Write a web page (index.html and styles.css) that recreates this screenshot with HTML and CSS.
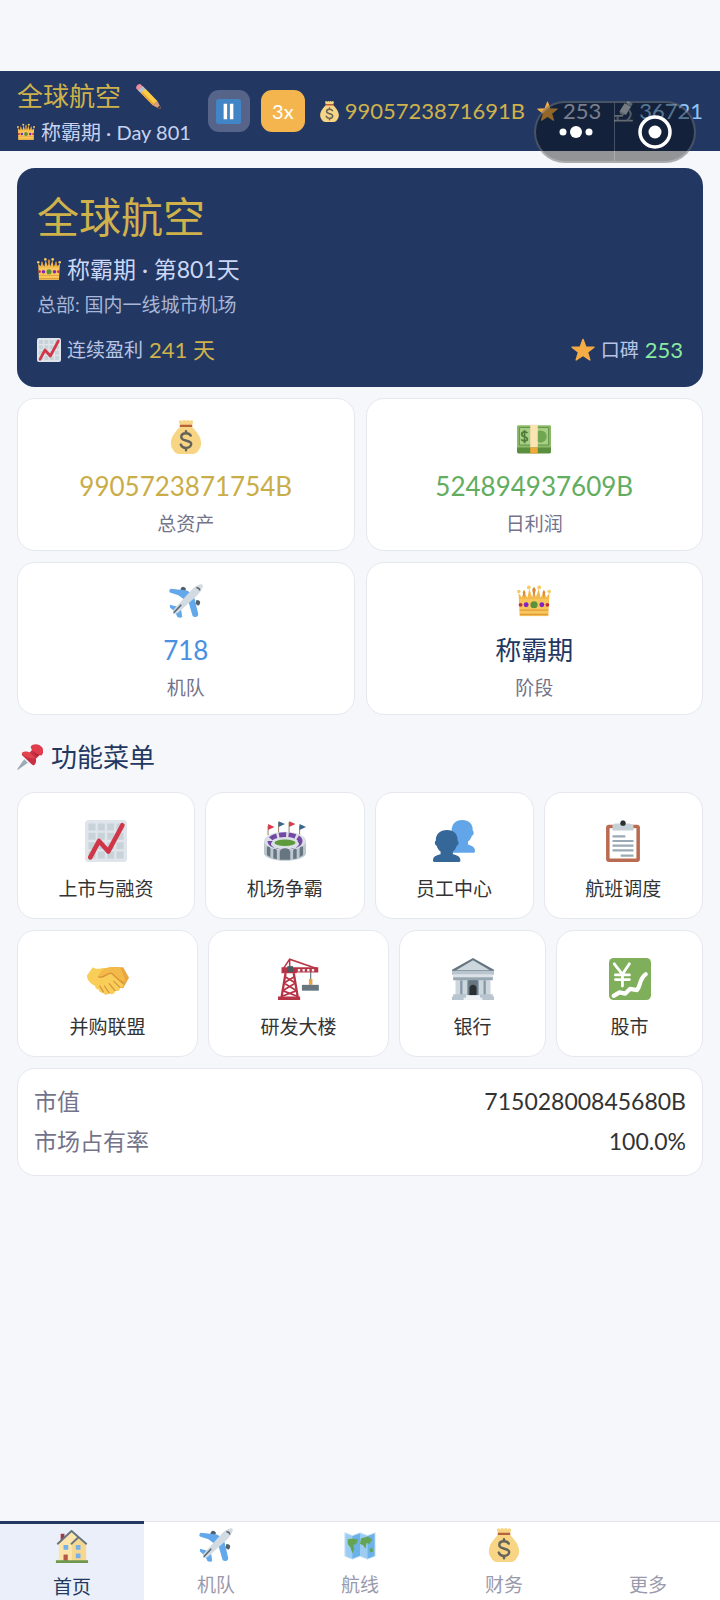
FILE: index.html
```html
<!DOCTYPE html>
<html lang="zh-CN">
<head>
<meta charset="utf-8">
<meta name="viewport" content="width=device-width, initial-scale=1">
<title>全球航空</title>
<link rel="stylesheet" href="styles.css">
</head>
<body>
<svg class="sprite" aria-hidden="true">
  <symbol id="crown" viewBox="0 0 36 36">
    <path fill="#f4ba4c" d="M3 34 1.600 9.500 5 14 7.500 8 11 14.500 13 5 16 14 18 6.500 20 14 23 5 25 14.500 28.500 8 31 14l3.400-4.500L33 34z"/>
    <path fill="#f7c75c" d="M3 16h30v18H3z"/>
    <g fill="#f7cb61"><circle cx="1.900" cy="8" r="1.900"/><circle cx="34.100" cy="8" r="1.900"/><circle cx="12.500" cy="3.600" r="2"/><circle cx="23.500" cy="3.600" r="2"/></g>
    <g fill="#d98a3d"><path d="m6 9 1.500-3L9 9l-1.500 6zM16 6l2-3 2 3-2 8zM27 9l1.500-3L30 9l-1.500 6z"/></g>
    <path fill="#e39a3b" d="M3 27h30v1.200H3zM3 31.500h30V33H3z"/>
    <circle cx="18" cy="22" r="3.800" fill="#5c913b"/><circle cx="9.700" cy="22" r="2.600" fill="#8224c4"/><circle cx="26.300" cy="22" r="2.600" fill="#8224c4"/><circle cx="3.800" cy="22" r="2" fill="#c1303c"/><circle cx="32.200" cy="22" r="2" fill="#c1303c"/>
  </symbol>
  <symbol id="pencil" viewBox="0 0 36 36">
    <path fill="#ea8f9d" d="M2 8C0 5 5 0 8 2l4 4-6 6z"/>
    <path fill="#b7c3cc" d="m4.500 10.500 6.500-6 4 4-6 6.500z"/>
    <path fill="#fccb48" d="m8 14 6.500-6 16.500 17-6 6z"/>
    <path fill="#e9a93a" d="m8 14 2-2 17 17-2 2z"/>
    <path fill="#d99e82" d="m25 31 6-6 4.500 8.500c.6 1.500-.6 2.500-2 2z"/>
    <path fill="#4b3b37" d="m34 31 1.500 3c.4 1.300-.5 1.700-1.500 1.500l-3-1.300z"/>
  </symbol>
  <symbol id="pause" viewBox="0 0 36 36">
    <rect width="36" height="36" rx="4" fill="#4185c6"/><path fill="#fff" d="M11 7h5v22h-5zM20 7h5v22h-5z"/>
  </symbol>
  <symbol id="moneybag" viewBox="0 0 36 36">
    <path fill="#f7d584" d="M12 7C7 12 2 18 2 24.500c0 3 .8 4.500 2 6.500 1.800 3.500 3.500 5 7 5h14c3.500 0 5.200-1.500 7-5 1.200-2 2-3.500 2-6.500C34 18 29 12 24 7z"/>
    <path fill="#f7d584" d="M11.500 6 10.500 1.500Q12-1 14 1.200 16-1 18 1.200 20-1 22 1.200 24-1 25.500 1.500L24.500 6z"/>
    <path fill="#b9613b" d="M12.500 5h11a1.200 1.200 0 0 1 0 2.500h-11a1.200 1.200 0 0 1 0-2.500z"/>
    <path fill="none" stroke="#66635a" stroke-width="2.600" stroke-linecap="round" d="M23 16.500c-1-2-3-2.500-5-2.500-3 0-5 1.500-5 4 0 5 10.500 3 10.500 7.500 0 2.500-2.500 4-5.500 4-2.500 0-4.700-1-5.500-3.500M18 12v2m0 16v2"/>
  </symbol>
  <symbol id="star" viewBox="0 0 36 36">
    <path fill="#f6ac44" stroke="#f6ac44" stroke-width="2" stroke-linejoin="round" d="m18 2 4.200 11.400 12.300.4-9.700 7.500L28.300 33 18 26.200 7.700 33l3.500-11.700-9.700-7.500 12.300-.4z"/>
  </symbol>
  <symbol id="microscope" viewBox="0 0 36 36">
    <path fill="#a5b4bf" d="M2 32h32v3H2zM3 24h14v3H3z"/>
    <path fill="none" stroke="#8796a1" stroke-width="3.500" d="M28 16c4 5 3 12-4 17M8 27v6"/>
    <path fill="#c3ced6" d="m20 4 11 6-9 14-11-6z"/><path fill="#9aa8b2" d="m25 0 9 4.500-3 5L22.500 5zM13 18l7 4-2 3-7-4z"/>
  </symbol>
  <symbol id="chart" viewBox="0 0 36 36">
    <rect width="36" height="36" rx="3" fill="#dfe5ea"/>
    <path fill="#c8d2d9" d="M3 3h6v6H3zM11 3h6v6h-6zM19 3h6v6h-6zM27 3h6v6h-6zM3 11h6v6H3zM11 11h6v6h-6zM19 11h6v6h-6zM27 11h6v6h-6zM3 19h6v6H3zM11 19h6v6h-6zM19 19h6v6h-6zM27 19h6v6h-6zM3 27h6v6H3zM11 27h6v6h-6zM19 27h6v6h-6zM27 27h6v6h-6z"/>
    <path fill="none" stroke="#cf3648" stroke-width="4" stroke-linecap="round" stroke-linejoin="round" d="m4.500 32 7.500-14 8 9L32 4.500"/>
  </symbol>
  <symbol id="cash" viewBox="0 0 36 36">
    <path fill="#5b8f40" d="M0 28h36v6a1.500 1.500 0 0 1-1.500 1.500h-33A1.500 1.500 0 0 1 0 34z"/>
    <path fill="#8dbb68" d="M0 7a1.500 1.500 0 0 1 1.500-1.500h33A1.500 1.500 0 0 1 36 7v22H0z"/>
    <path fill="#a9cf87" stroke="#5f8f47" stroke-width="1" d="M2.500 8h31v18.500h-31z"/>
    <circle cx="25" cy="17.500" r="6.500" fill="#71a650"/>
    <path fill="none" stroke="#4e7c39" stroke-width="1.800" d="M11 14c-1-2-6-2-6 1s6 2.500 6 5-5 3-6.500.5M8 10.500v14"/>
    <path fill="#fbe3b4" d="M14 5h8v24h-8z"/><path fill="#f0a83a" d="M14 29h8v6.500h-8z"/>
  </symbol>
  <symbol id="plane" viewBox="0 0 36 36">
    <path fill="#50616c" d="M12 6c1-4 4-4 6-1l-1 3zM29 17c5 0 5 4 2 6l-3-2z"/>
    <path fill="#62a8ea" d="m2 5 17 2 5 3 3 5 4 17c0 3-4 4-6 2l-4-14-11-8L1 9c-1-1-1-3 1-4zM1 22l8 2 4 4 1 7c-1 1-4 1-5 0l-3-6-5-4z"/>
    <path fill="#d3dbe2" d="M33 .5c2-.8 3.500.7 2.500 3-1 3-3 6-6 9L9 31l-5 1 1-5L24 6c3-3 6-5 9-5.500z"/>
    <path fill="none" stroke="#56646e" stroke-width="1.600" d="M5 30.500 13 22M29 4c2-.3 3.500 1 3.500 3"/>
  </symbol>
  <symbol id="pin" viewBox="0 0 36 36">
    <path fill="#9daab3" d="m10 21 5 5L1.500 35.500C.5 36 0 35.500.5 34.500z"/>
    <path fill="#c92f42" d="M7 13c4-2 7-2 10-.5L22 7l9 9-5 4.500c1 3 .5 6-2 8.500-1 .8-2 .5-3-.2L7.500 16C6.500 15 6.500 14 7 13z"/>
    <path fill="#e0444f" d="M6.500 12.500c4-3 9-2.500 12 0l7 7c-6 2-17-2-19-7z"/>
    <path fill="#df3d4c" d="M19 3.500C22-1 31-1 35 5c2 4 1.500 8-1 11-6 0-14-5-15-12.500z"/>
    <path fill="#a92334" d="m20 8 7 8 7-1c-5 0-11-3-14-7z"/>
  </symbol>
  <symbol id="stadium" viewBox="0 0 36 36">
    <path fill="none" stroke="#99866e" stroke-width=".9" d="M3.500 13V5M12.500 11V2M21.500 11V2M30.500 13V5"/>
    <path fill="#d73b4b" d="m3.500 3.500 5.500 2.500-5.500 2.500zM21.500 1l5.500 2.500L21.500 6z"/><path fill="#3a668f" d="M12.500 1 18 3.500 12.500 6zM30.500 3.500 36 6l-5.500 2.500z"/>
    <path fill="#bcc8d0" d="M0 18h36v11c-3 8-33 8-36 0z"/>
    <ellipse cx="18" cy="18" rx="18" ry="8" fill="#d9e1e7"/>
    <ellipse cx="18" cy="18" rx="13" ry="5.500" fill="none" stroke="#7548a4" stroke-width="4" stroke-dasharray="6 2"/>
    <ellipse cx="18" cy="20.500" rx="12" ry="4.500" fill="#d9e1e7"/><ellipse cx="18" cy="19.500" rx="9" ry="2.800" fill="#5d9a3b"/>
    <path fill="#66757f" d="M13.500 34v-6c0-5 9-5 9 0v6zM8 33v-8c2-1 3 0 3 2v6.500zM25 33.500V27c0-2 1-3 3-2v8zM2.500 30v-7c1.500-1 3 0 3 2v7zM30.500 32v-7c0-2 1.500-3 3-2v7z"/>
  </symbol>
  <symbol id="people" viewBox="0 0 36 36">
    <path fill="#62a6e9" d="M25 0c6 0 9.500 4 9 9 1.500 1 1 4-.7 4.500-.5 2-1.600 4-3.300 5v2.500c3 1 6 2 6 5.500 0 1-.5 1.500-1.500 1.500H16V9c0-5 3-9 9-9z"/>
    <path fill="#356799" d="M12 8.500c6 0 9.500 4 9 9 1.500 1 1 4-.7 4.500-.5 2-1.600 4-3.300 5v2.300c3 .7 6.500 1.700 6.500 5.200 0 1-.5 1.500-1.500 1.500H1.500C.5 36 0 35.500 0 34.500c0-3.500 3.500-4.500 6.500-5.200V27c-1.700-1-2.800-3-3.300-5C1.500 21.500 1 18.500 2.500 17.500 2 12.500 6 8.500 12 8.500z"/>
  </symbol>
  <symbol id="clipboard" viewBox="0 0 36 36">
    <rect x="3.500" y="4" width="29" height="32" rx="2.500" fill="#ba6a50"/><path fill="#fff" d="M6.500 7h23v26h-23z"/>
    <path fill="#c6d0d7" d="M14 3h2c0-4 4-4 4 0h3.500L27 4.500V9H9V4.500L11 3z"/><circle cx="18" cy="2.700" r="2.300" fill="#292f33"/>
    <path stroke="#99aab5" stroke-width="1.800" d="M9 14h11M9 18h18M9 22h18M9 26h18M16 30.500h11"/>
  </symbol>
  <symbol id="handshake" viewBox="0 0 36 36">
    <path fill="#e9a83e" d="M18 9c5-2 9-1 13-1l5 9-5 9-13-2z"/>
    <path fill="#f9ce58" d="M5 8c4 3 8-.5 13 1l12 12c3 3 0 5-2 4 1 3-2 4-4 3 0 3-3 4-5 2-1 2-4 2-5 0-2 0-4-1-4-3-2 0-3-1-3-3-4-2-7-5-7-9z"/>
    <path fill="#f4ba49" d="M11 13c4-6 12-6 18-4l4 11c-5-1-8-4-12-7-3 0-7 5-10 4-2-1-1-3 0-4z"/>
    <path fill="none" stroke="#d8943c" stroke-width="1.100" stroke-linecap="round" d="M10 16c3 2 7-3 11-3l10 9M23 20l5 5M19 22l5 6M15 24l4 6M11 24l3 5"/>
  </symbol>
  <symbol id="crane" viewBox="0 0 36 36">
    <path fill="none" stroke="#b63446" stroke-width="1.300" d="M4 10 10 1l23 8M10 1v9"/>
    <path fill="none" stroke="#b63446" stroke-width="2" d="M6.500 13 3 34M13.500 13l3.500 21"/>
    <path fill="none" stroke="#b63446" stroke-width="1.500" d="m6 16 9 5.500M14 16l-9 5.500M5 21.500 16 28M15 21.500 4 28M3 33l13-5M17 33 4 28"/>
    <path fill="#b63446" d="M0 33h19v3H0zM3 8h13v5H3zM15 8h19.500v4.500H15z"/>
    <path fill="#f0f0f0" d="M17 9.500h2v2h-2zM21 9.500h2v2h-2zM25 9.500h2v2h-2zM29 9.500h2v2h-2z"/>
    <path fill="#4b5961" d="M8 7h5v5H8z"/><path stroke="#66757f" stroke-width="1" d="M28 12v8"/>
    <path fill="#e7a146" d="M26.500 18h3v5h-3z"/><path fill="#66757f" d="M20.500 23H35v5H20.500z"/>
  </symbol>
  <symbol id="bank" viewBox="0 0 36 36">
    <path fill="#66757f" d="M18 0 36 10v2H0v-2z"/><path fill="#ccd6dd" d="m18 2 14.500 8.500h-29z"/>
    <path fill="#b8c5ce" d="M0 11h36v3.500H0z"/><path fill="#dbe2e7" d="M1 14h34v3H1z"/><path fill="#97a7b2" d="M1 16.500h34V19H1z"/>
    <path fill="#8899a6" d="M4 19h28v13H4z"/><path fill="#ccd6dd" d="M3 19h4v13H3zM9 19h4v13H9zM23 19h4v13h-4zM29 19h4v13h-4z"/>
    <path fill="#66757f" d="M14 19h8v13h-8z"/><path fill="#292f33" d="M15 32v-6c0-4 6-4 6 0v6z"/>
    <path fill="#b8c5ce" d="M1 31h12v2H1zM23 31h12v2H23zM0 33h36v3H0z"/><path fill="#eef2f5" d="M12 32h12v2H12zM10 34h16v2H10z"/>
  </symbol>
  <symbol id="yen" viewBox="0 0 36 36">
    <rect width="36" height="36" rx="4" fill="#80af5b"/>
    <path fill="none" stroke="#fff" stroke-width="2.400" stroke-linecap="round" d="m4.500 5 7 9 6-9M11.500 14v10M5.500 14.500h12M5.500 18.500h12"/>
    <path fill="none" stroke="#fff" stroke-width="3.600" stroke-linecap="round" stroke-linejoin="round" d="m4 32.500 5-3 5 1 4-4 6 1c3-3 2-10 7.500-13.500"/>
  </symbol>
  <symbol id="house" viewBox="0 0 36 36">
    <path fill="#9e3c43" d="M6 4h4v9H6z"/><path fill="#fbe5ab" d="m4 14 13-12 15 12v19H4z"/><path fill="#f5d78f" d="m18 15 7-6 8 6v18H18z"/>
    <path fill="none" stroke="#66757f" stroke-width="2" stroke-linecap="round" stroke-linejoin="round" d="M3 14.500 17.500 1 33 14.500M17.500 14.500 24 8.500"/>
    <path fill="#75b1e9" d="M9 16h5v5H9zM22 16h5v5h-5zM22 25h5v5h-5z"/><path fill="#b65a48" d="M9 26h4.500v7H9z"/><path fill="#6e984d" d="M1 32h34v3H1z"/>
  </symbol>
  <symbol id="map" viewBox="0 0 36 36">
    <path fill="#6cb2ea" d="m2 5 8 3 8-3 8 3 8-3v25l-8 3-8-3-8 3-8-3z"/><path fill="#9bcdf3" d="m2 5 8 3v25l-8-3zM18 5l8 3v25l-8-3z"/>
    <path fill="#66a455" d="m5 12 5-1 6 1-2 5-3 1 1 4-2 5-2-6-3-4zM19 11l7-2 5 3-3 5-3-1-1 6-3-4-3-1zM28 22l3-1 1 4-3 1z"/>
    <path fill="none" stroke="#d5e7f3" stroke-width="1" d="m2 5 8 3 8-3 8 3 8-3v25l-8 3-8-3-8 3-8-3z"/>
  </symbol>
</svg>

<header class="topbar">
  <div class="company">
    <button class="company-name" type="button">全球航空 <svg class="icon icon-m"><use href="#pencil"/></svg></button>
    <div class="company-stage"><svg class="icon icon-s"><use href="#crown"/></svg><span>称霸期 · Day 801</span></div>
  </div>
  <button class="speed speed-pause" type="button" aria-label="暂停"><svg class="icon icon-l"><use href="#pause"/></svg></button>
  <button class="speed speed-rate" type="button">3x</button>
  <div class="resources">
    <span class="resource gold"><svg class="icon icon-m"><use href="#moneybag"/></svg>9905723871691B</span>
    <span class="resource pale"><svg class="icon icon-m"><use href="#star"/></svg>253</span>
    <span class="resource sky"><svg class="icon icon-m"><use href="#microscope"/></svg>36721</span>
  </div>
  <div class="capsule">
    <button class="capsule-btn" type="button" aria-label="更多操作"><svg class="dots" viewBox="0 0 34 14"><circle cx="4" cy="7" r="3.500"/><circle cx="17" cy="7" r="6"/><circle cx="30" cy="7" r="3.500"/></svg></button>
    <button class="capsule-btn" type="button" aria-label="关闭"><svg class="target" viewBox="0 0 34 34"><circle class="ring" cx="17" cy="17" r="15"/><circle cx="17" cy="17" r="6.500"/></svg></button>
  </div>
</header>

<main class="content">
  <section class="hero">
    <h1 class="hero-title">全球航空</h1>
    <p class="hero-stage"><svg class="icon icon-s"><use href="#crown"/></svg>称霸期 · 第801天</p>
    <p class="hero-base">总部: 国内一线城市机场</p>
    <div class="hero-foot">
      <span class="fact"><svg class="icon icon-s"><use href="#chart"/></svg>连续盈利 <b class="fact-value gold">241 天</b></span>
      <span class="fact"><svg class="icon icon-s"><use href="#star"/></svg>口碑 <b class="fact-value mint">253</b></span>
    </div>
  </section>

  <section class="stats">
    <div class="card stat"><svg class="icon icon-l"><use href="#moneybag"/></svg><strong class="stat-value gold-dark">9905723871754B</strong><span class="stat-label">总资产</span></div>
    <div class="card stat"><svg class="icon icon-l"><use href="#cash"/></svg><strong class="stat-value green">524894937609B</strong><span class="stat-label">日利润</span></div>
    <div class="card stat"><svg class="icon icon-l"><use href="#plane"/></svg><strong class="stat-value blue">718</strong><span class="stat-label">机队</span></div>
    <div class="card stat"><svg class="icon icon-l"><use href="#crown"/></svg><strong class="stat-value navy">称霸期</strong><span class="stat-label">阶段</span></div>
  </section>

  <h2 class="section-title"><svg class="icon icon-m"><use href="#pin"/></svg>功能菜单</h2>
  <div class="menu-row">
    <button class="card menu-item" type="button"><svg class="icon icon-xl"><use href="#chart"/></svg>上市与融资</button>
    <button class="card menu-item" type="button"><svg class="icon icon-xl"><use href="#stadium"/></svg>机场争霸</button>
    <button class="card menu-item" type="button"><svg class="icon icon-xl"><use href="#people"/></svg>员工中心</button>
    <button class="card menu-item" type="button"><svg class="icon icon-xl"><use href="#clipboard"/></svg>航班调度</button>
  </div>
  <div class="menu-row">
    <button class="card menu-item" type="button"><svg class="icon icon-xl"><use href="#handshake"/></svg>并购联盟</button>
    <button class="card menu-item" type="button"><svg class="icon icon-xl"><use href="#crane"/></svg>研发大楼</button>
    <button class="card menu-item" type="button"><svg class="icon icon-xl"><use href="#bank"/></svg>银行</button>
    <button class="card menu-item" type="button"><svg class="icon icon-xl"><use href="#yen"/></svg>股市</button>
  </div>

  <dl class="card market">
    <div class="market-row"><dt>市值</dt><dd>71502800845680B</dd></div>
    <div class="market-row"><dt>市场占有率</dt><dd>100.0%</dd></div>
  </dl>
</main>

<nav class="tabs">
  <a class="tab tab-active" href="#home" aria-current="page"><svg class="icon icon-l"><use href="#house"/></svg>首页</a>
  <a class="tab" href="#fleet"><svg class="icon icon-l"><use href="#plane"/></svg>机队</a>
  <a class="tab" href="#routes"><svg class="icon icon-l"><use href="#map"/></svg>航线</a>
  <a class="tab" href="#finance"><svg class="icon icon-l"><use href="#moneybag"/></svg>财务</a>
  <a class="tab" href="#more"><span class="icon icon-l"></span>更多</a>
</nav>
</body>
</html>
```

FILE: styles.css
```css
* { box-sizing: border-box; }

body {
  margin: 0;
  padding-top: 71px;
  min-height: 100vh;
  display: flex;
  flex-direction: column;
  background: #f5f7fb;
  color: #333;
  font-family: Lato, "Noto Sans CJK SC", sans-serif;
  font-size: 19px;
  line-height: 28px;
}

h1, h2, p, dl, dd { margin: 0; font-weight: inherit; }
b, strong { font-weight: inherit; }
button { font: inherit; color: inherit; border: 0; padding: 0; background: none; cursor: pointer; }

.sprite { position: absolute; width: 0; height: 0; }
.icon { display: block; flex: none; }
.icon-s { width: 24px; height: 24px; }
.icon-m { width: 26px; height: 26px; }
.icon-l { width: 34px; height: 34px; }
.icon-xl { width: 42px; height: 42px; }

.gold { color: #cfb24b; }
.gold-dark { color: #c9ad48; }
.pale { color: #c8d2ec; }
.sky { color: #90c4f5; }
.mint { color: #8aeaa0; }
.green { color: #62ad60; }
.blue { color: #4a90e2; }
.navy { color: #223862; }

/* Top bar */
.topbar {
  position: relative;
  display: flex;
  align-items: center;
  gap: 11px;
  padding: 0 17px;
  height: 80px;
  background: #223862;
  white-space: nowrap;
}
.company { margin-right: 6px; padding-top: 3px; }
.company-name {
  display: flex;
  align-items: center;
  gap: 14px;
  color: #cfb24b;
  font-size: 26px;
  line-height: 38px;
}
.company-stage {
  display: flex;
  align-items: center;
  gap: 6px;
  color: #c8d2f0;
  font-size: 20px;
  line-height: 34px;
}
.company-stage .icon { width: 18px; height: 18px; }
.speed {
  flex: none;
  display: flex;
  align-items: center;
  justify-content: center;
  width: 42px;
  height: 42px;
  border-radius: 11px;
}
.speed .icon { width: 25px; height: 25px; }
.speed-pause { background: #56648a; }
.speed-rate { width: 44px; background: #f4b54e; color: #fff; font-size: 20px; }
.resources { display: flex; align-items: center; gap: 12px; margin-left: auto; }
.resource { display: flex; align-items: center; gap: 5px; font-size: 22px; }
.resource .icon { width: 21px; height: 21px; }

.capsule {
  position: absolute;
  top: 30px;
  right: 24px;
  display: flex;
  width: 162px;
  height: 62px;
  border: 2px solid rgba(255, 255, 255, .22);
  border-radius: 31px;
  background: rgba(0, 0, 0, .4);
}
.capsule-btn {
  flex: 1;
  display: flex;
  align-items: center;
  justify-content: center;
}
.capsule-btn + .capsule-btn { box-shadow: -1px 0 rgba(255, 255, 255, .22); }
.dots { width: 34px; height: 14px; fill: #fff; }
.target { width: 34px; height: 34px; fill: #fff; }
.ring { fill: none; stroke: #fff; stroke-width: 3.5; }

/* Content */
.content {
  flex: 1;
  display: flex;
  flex-direction: column;
  gap: 11px;
  padding: 17px;
}
.hero { padding: 20px; border-radius: 18px; background: #223862; color: #b9c5e6; }
.hero-title { color: #cfb24b; font-size: 42px; line-height: 58px; }
.hero-stage {
  display: flex;
  align-items: center;
  gap: 6px;
  margin-top: 6px;
  color: #ccd7f5;
  font-size: 23px;
  line-height: 34px;
}
.hero-base { margin-top: 5px; color: #a9b6d8; }
.hero-foot { display: flex; justify-content: space-between; margin-top: 14px; }
.fact { display: flex; align-items: center; gap: 6px; line-height: 34px; }
.fact-value { font-size: 22px; }

.card { border: 1px solid #e6e8ef; border-radius: 18px; background: #fff; }

.stats { display: grid; grid-template-columns: 1fr 1fr; gap: 11px; }
.stat { display: flex; flex-direction: column; align-items: center; padding: 21px 12px 12px; }
.stat-value { margin: 12px 0 4px; font-size: 26px; line-height: 40px; }
.stat-label { color: #73738a; }

.section-title {
  display: flex;
  align-items: center;
  gap: 8px;
  margin: 13px 0 6px;
  color: #223862;
  font-size: 26px;
  line-height: 36px;
}

.menu-row { display: flex; gap: 10px; }
.menu-item {
  flex: 1 1 auto;
  display: flex;
  flex-direction: column;
  align-items: center;
  gap: 13px;
  padding: 27px 0 15px;
}

.market { padding: 12px 16px 14px; font-size: 23px; line-height: 40px; }
.market-row { display: flex; justify-content: space-between; }
.market dt { color: #73738a; }

/* Bottom tabs */
.tabs { display: flex; border-top: 1px solid #e4e6ec; background: #fff; }
.tab {
  flex: 1;
  display: flex;
  flex-direction: column;
  align-items: center;
  gap: 11px;
  padding: 6px 0 1px;
  color: #9a9aac;
  line-height: 24px;
  text-decoration: none;
}
.tab-active { margin-top: -1px; border-top: 3px solid #223862; background: #eaeff9; color: #223862; }
```
